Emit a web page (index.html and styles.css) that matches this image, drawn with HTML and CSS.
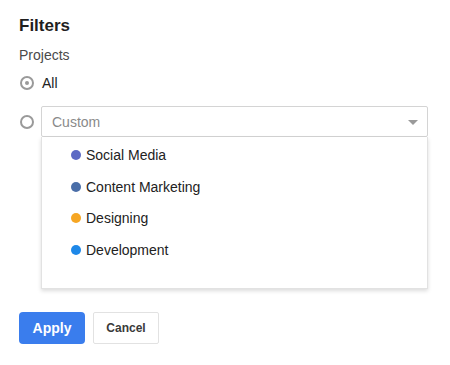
FILE: index.html
```html
<!doctype html>
<html lang="en">
	<head>
		<meta charset="utf-8" />
		<title>Filters</title>
		<link rel="stylesheet" href="styles.css">
	</head>
	<body>
		<section class="filters">
			<h2 class="title">Filters</h2>
			<div class="label">Projects</div>

			<label class="option">
				<span class="radio checked"></span>
				<span>All</span>
			</label>

			<div class="option custom">
				<span class="radio"></span>
				<div class="select-wrap">
					<div class="select">
						<span class="placeholder">Custom</span>
						<span class="arrow"></span>
					</div>
					<div class="menu">
						<a><span class="dot social"></span>Social Media</a>
						<a><span class="dot content"></span>Content Marketing</a>
						<a><span class="dot design"></span>Designing</a>
						<a><span class="dot dev"></span>Development</a>
					</div>
				</div>
			</div>

			<div class="actions">
				<button class="btn apply">Apply</button>
				<button class="btn cancel">Cancel</button>
			</div>
		</section>
	</body>
</html>
```

FILE: styles.css
```css
/* base */

body {
	margin: 0;
	background: #fff;
	color: #222;
	font-family: "Liberation Sans", Arial, sans-serif;
	font-size: 14px;
}

.filters {
	padding: 16px 22px 0 19px;
}

.title {
	margin: 0;
	font-size: 17px;
	line-height: 20px;
	font-weight: bold;
	color: #1f1f1f;
}

.label {
	margin-top: 9px;
	line-height: 20px;
	color: #4a4a4a;
}

/* radio rows */

.option {
	display: flex;
	align-items: center;
	gap: 8px;
	margin-top: 8px;
	line-height: 20px;
}

.radio {
	display: inline-flex;
	align-items: center;
	justify-content: center;
	box-sizing: border-box;
	width: 14px;
	height: 14px;
	margin-left: 1px;
	border: 2px solid #9a9a9a;
	border-radius: 50%;
	flex: none;
}

.radio.checked::after {
	content: "";
	width: 4px;
	height: 4px;
	border-radius: 50%;
	background: #9a9a9a;
}

.custom {
	align-items: flex-start;
	gap: 7px;
	margin-top: 13px;
}

.custom .radio {
	margin-top: 9px;
}

.select-wrap {
	flex: 1;
}

.select {
	display: flex;
	align-items: center;
	justify-content: space-between;
	box-sizing: border-box;
	height: 31px;
	padding: 0 9px 0 10px;
	border: 1px solid #d4d4d4;
	border-radius: 2px;
}

.placeholder {
	color: #8a8a8a;
}

.arrow {
	width: 0;
	height: 0;
	border-left: 5px solid transparent;
	border-right: 5px solid transparent;
	border-top: 5px solid #9a9a9a;
	margin-top: 2px;
}

/* dropdown */

.menu {
	box-sizing: border-box;
	height: 152px;
	padding: 2px 0 0 29px;
	border: 1px solid #e2e2e2;
	border-top: 0;
	box-shadow: 0 2px 4px rgba(0, 0, 0, 0.14);
}

.menu a {
	display: flex;
	align-items: center;
	height: 31.7px;
	color: #222;
}

.dot {
	width: 10px;
	height: 10px;
	margin-right: 5px;
	border-radius: 50%;
	flex: none;
}

.social { background: #5c6ac4; }
.content { background: #4a6ea8; }
.design { background: #f6a623; }
.dev { background: #1e88e8; }

/* buttons */

.actions {
	display: flex;
	gap: 8px;
	margin-top: 23px;
}

.btn {
	height: 32px;
	width: 66px;
	padding: 0;
	border-radius: 4px;
	font-family: inherit;
	font-weight: bold;
	cursor: pointer;
}

.apply {
	border: 0;
	background: #3a7ded;
	color: #fff;
	font-size: 14px;
}

.cancel {
	border: 1px solid #e2e2e2;
	border-radius: 2px;
	background: #fff;
	color: #3a3a3a;
	font-size: 12px;
}
```
